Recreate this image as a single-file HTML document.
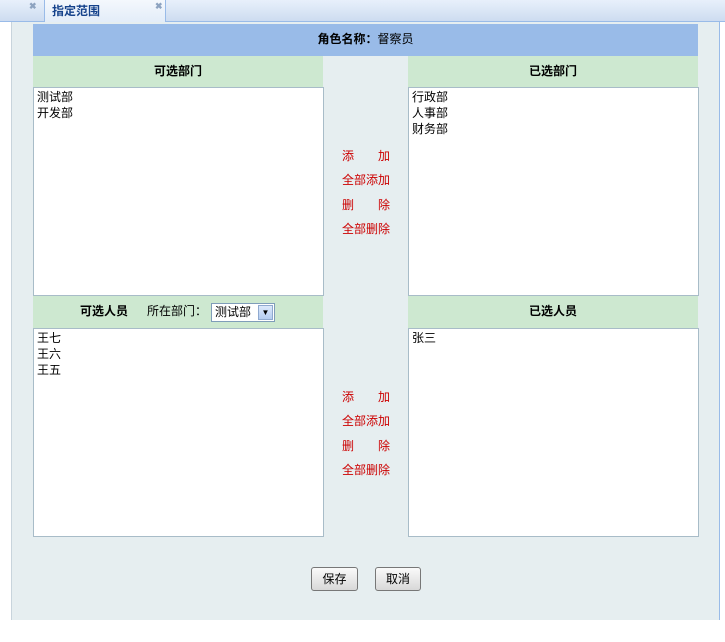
<!DOCTYPE html>
<html><head><meta charset="utf-8"><style>
*{margin:0;padding:0;box-sizing:border-box}
body{width:725px;height:642px;background:#fff;position:relative;overflow:hidden;font-family:"Liberation Sans","Noto Sans CJK SC","WenQuanYi Zen Hei",sans-serif;font-size:12px;color:#000}
.a{position:absolute}
.tabbar{left:0;top:0;width:725px;height:22px;background:linear-gradient(#e8f0fb,#cddcf0);border-bottom:1px solid #99bbe8}
.tab{left:44px;top:0;width:122px;height:23px;background:linear-gradient(#f4f8fd,#e2ecf8);border-left:1px solid #99bbe8;border-right:1px solid #99bbe8;font-weight:bold;color:#15428b;font-size:12px;padding:2px 0 0 7px}
.x{font-size:9px;color:#8da3c0;font-weight:bold}
.main{left:11px;top:22px;width:709px;height:598px;background:#e6eef0;border-left:1px solid #c8d4dc;border-right:1px solid #99bbe8}
.hd{background:#99bbe8;font-weight:bold;text-align:center;line-height:31px}
.gr{background:#cde8d0;font-weight:bold;text-align:center;line-height:31px}
.box{background:#fff;border:1px solid #a8bcc8;padding:1px 3px;line-height:16px}
.r{color:#cc0000;width:48px;left:342px;display:flex;justify-content:space-between}
.btn{height:24px;border:1px solid #777;border-radius:3px;background:linear-gradient(#fafafa,#d8d8d8);text-align:center;line-height:22px}
</style></head><body>
<div class="a tabbar"></div>
<div class="a x" style="left:29px;top:1px">✖</div>
<div class="a tab">指定范围</div>
<div class="a x" style="left:155px;top:1px">✖</div>
<div class="a main"></div>
<div class="a hd" style="left:33px;top:24px;width:665px;height:32px">角色名称：<span style="font-weight:normal">督察员</span></div>
<div class="a gr" style="left:33px;top:56px;width:290px;height:32px">可选部门</div>
<div class="a gr" style="left:408px;top:56px;width:290px;height:32px">已选部门</div>
<div class="a box" style="left:33px;top:87px;width:291px;height:209px">测试部<br>开发部</div>
<div class="a box" style="left:408px;top:87px;width:291px;height:209px">行政部<br>人事部<br>财务部</div>
<div class="a r" style="top:147px"><span>添</span><span>加</span></div>
<div class="a r" style="top:171px">全部添加</div>
<div class="a r" style="top:196px"><span>删</span><span>除</span></div>
<div class="a r" style="top:220px">全部删除</div>
<div class="a gr" style="left:33px;top:296px;width:290px;height:32px"><span style="position:absolute;left:47px">可选人员</span><span style="position:absolute;left:114px;font-weight:normal">所在部门：</span>
<span style="position:absolute;left:178px;top:7px;width:64px;height:19px;background:#fff;border:1px solid #7f9db9;font-weight:normal;line-height:16px;text-align:left;padding-left:3px">测试部<span style="position:absolute;right:1px;top:1px;width:15px;height:15px;background:linear-gradient(#dce8fb,#b4cdf0);border:1px solid #8fa9cf;font-size:8px;line-height:14px;text-align:center">▼</span></span></div>
<div class="a gr" style="left:408px;top:296px;width:290px;height:32px">已选人员</div>
<div class="a box" style="left:33px;top:328px;width:291px;height:209px">王七<br>王六<br>王五</div>
<div class="a box" style="left:408px;top:328px;width:291px;height:209px">张三</div>
<div class="a r" style="top:388px"><span>添</span><span>加</span></div>
<div class="a r" style="top:412px">全部添加</div>
<div class="a r" style="top:437px"><span>删</span><span>除</span></div>
<div class="a r" style="top:461px">全部删除</div>
<div class="a btn" style="left:311px;top:567px;width:47px">保存</div>
<div class="a btn" style="left:375px;top:567px;width:46px">取消</div>
</body></html>
